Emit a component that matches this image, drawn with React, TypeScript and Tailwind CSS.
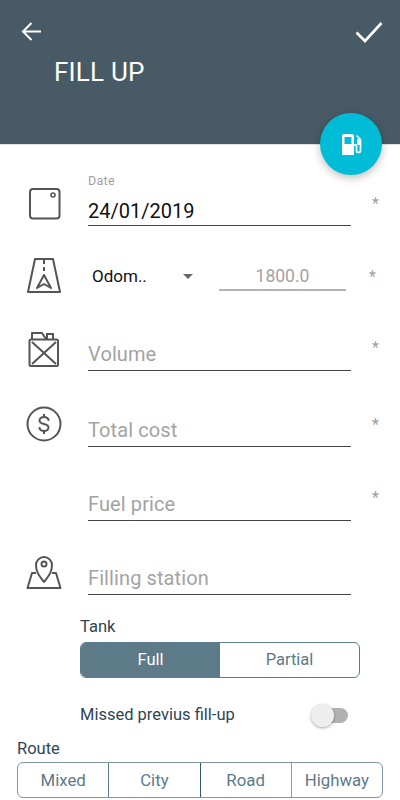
import React from "react";

const font = "font-['Roboto','Noto_Sans',sans-serif]";

function CalendarIcon() {
  return (
    <svg width="34" height="34" viewBox="0 0 34 34" fill="none" stroke="#555" strokeWidth="2">
      <rect x="2" y="2" width="29.5" height="29.5" rx="3" />
      <circle cx="25" cy="8" r="2" strokeWidth="1.6" />
    </svg>
  );
}

function RoadIcon() {
  return (
    <svg width="36" height="38" viewBox="0 0 36 38" fill="none" stroke="#555" strokeWidth="2">
      <path d="M9 2h18l7 33H2z" strokeLinejoin="round" />
      <path d="M18 3v4M18 10v4" />
      <path d="M11 31l7-13 7 13-7-4z" strokeLinejoin="round" />
    </svg>
  );
}

function CanIcon() {
  return (
    <svg width="34" height="38" viewBox="0 0 34 38" fill="none" stroke="#555" strokeWidth="2">
      <path d="M4 9V3h10l4 6" strokeLinejoin="round" />
      <path d="M19 9V4h6v5" />
      <rect x="1.500" y="9.500" width="28.500" height="26.500" rx="1.500" />
      <path d="M4 12l24 22M28 12L4 34" />
    </svg>
  );
}

function DollarIcon() {
  return (
    <svg width="36" height="36" viewBox="0 0 36 36" fill="none" stroke="#555" strokeWidth="2">
      <circle cx="18" cy="18" r="16.500" />
      <path d="M22.500 14c-.5-2-2.300-3-4.500-3s-4.500 1.300-4.500 3.500c0 2.300 2 3 4.500 3.500s4.500 1.300 4.500 3.500-2.300 3.500-4.500 3.500-4-1-4.500-3" strokeLinecap="round" />
      <path d="M18 8v3M18 25v3" />
    </svg>
  );
}

function MapPinIcon() {
  return (
    <svg width="38" height="37" viewBox="0 0 38 37" fill="none" stroke="#555" strokeWidth="2">
      <path d="M18 28c-4.500-6-8-9.500-8-17a8 8 0 0 1 16 0c0 7.500-3.500 11-8 17z" strokeLinejoin="round" />
      <circle cx="18" cy="10" r="2.500" />
      <path d="M10 19H6L1.500 34h33L30 19h-4" strokeLinejoin="round" />
    </svg>
  );
}

function PumpIcon() {
  return (
    <svg className="ml-[2px]" width="20" height="21" viewBox="0 0 20 21" fill="white">
      <path fillRule="evenodd" d="M0 2a2 2 0 0 1 2-2h8a2 2 0 0 1 2 2v19H0zM2.500 3v7h7V3z" />
      <path d="M14.500 1.500l4 4v11a2 2 0 0 1-4 0V11H12" fill="none" stroke="white" strokeWidth="1.700" />
      <path d="M15 5h4v6h-2a2 2 0 0 1-2-2z" />
    </svg>
  );
}

function Row({ height, icon, iconClass, children, starClass }: { height: string; icon?: React.ReactNode; iconClass?: string; children: React.ReactNode; starClass?: string }) {
  return (
    <div className={`flex ${height}`}>
      <div className={`w-[88px] shrink-0 ${iconClass ?? ""}`}>{icon}</div>
      <div className="w-[263px] h-full flex flex-col justify-end">{children}</div>
      {starClass && <span className={`ml-[21px] text-[16px] leading-4 text-[#a0a0a0] ${starClass}`}>*</span>}
    </div>
  );
}

function Field({ label }: { label: string }) {
  return <div className="border-b border-[#444] h-8 text-[20px] leading-[30px] tracking-[0.1px] text-[#a3a3a3]">{label}</div>;
}

export default function App() {
  return (
    <div className={`w-[400px] h-[800px] overflow-hidden bg-white relative ${font}`}>
      <header className="h-[145px] bg-[#475a65] text-white border-b border-[#dfe3e5]">
        <div className="flex justify-between pl-[21px] pr-[17px] pt-[21px]">
          <svg width="21" height="21" viewBox="0 0 21 21" fill="none" stroke="white" strokeWidth="2">
            <path d="M20 10.500H2M10.500 2L2 10.500l8.500 8.500" />
          </svg>
          <svg width="28" height="22" viewBox="0 0 28 22" fill="none" stroke="white" strokeWidth="2.600">
            <path d="M1.500 11.500l8.500 8.500L26.500 2" />
          </svg>
        </div>
        <h1 className="ml-[54px] mt-[13px] text-[26px] leading-8 tracking-[0.2px]">FILL UP</h1>
      </header>

      <div className="absolute left-[320px] top-[113px] w-[62px] h-[62px] rounded-full bg-[#00bcd6] shadow-[0_3px_8px_rgba(0,0,0,0.25)] flex items-center justify-center">
        <PumpIcon />
      </div>

      <Row height="h-[81px]" icon={<CalendarIcon />} iconClass="pt-[42px] pl-[28px]" starClass="mt-[51px]">
        <div className="text-[12.500px] leading-4 text-[#a0a0a0] tracking-[0.3px] mb-[5px]">Date</div>
        <div className="border-b border-[#444] h-[32px] text-[20px] leading-[34px] text-[#111]">24/01/2019</div>
      </Row>

      <div className="flex h-[65px] items-start">
        <div className="w-[88px] pl-[26px] pt-[31px] shrink-0"><RoadIcon /></div>
        <div className="w-[131px] flex items-center pl-[4px] pr-[26px] justify-between mt-[38px] text-[17px] leading-6 text-[#111]">
          <span>Odom..</span>
          <span className="w-0 h-0 border-x-[5px] border-x-transparent border-t-[5px] border-t-[#666]" />
        </div>
        <div className="w-[127px] h-[33px] mt-[32px] border-b-2 border-[#b3b3b3] text-center text-[17.500px] leading-[36px] text-[#a3a3a3]">1800.0</div>
        <span className="ml-[23px] mt-[43px] text-[16px] leading-4 text-[#a0a0a0]">*</span>
      </div>

      <Row height="h-[80px]" icon={<CanIcon />} iconClass="pt-[39px] pl-[28px]" starClass="mt-[49px]">
        <Field label="Volume" />
      </Row>
      <Row height="h-[76px]" icon={<DollarIcon />} iconClass="pt-[35px] pl-[26px]" starClass="mt-[46px]">
        <Field label="Total cost" />
      </Row>
      <Row height="h-[74px]" starClass="mt-[43px]">
        <Field label="Fuel price" />
      </Row>
      <Row height="h-[74px]" icon={<MapPinIcon />} iconClass="pt-[33px] pl-[26px]">
        <Field label="Filling station" />
      </Row>

      <div className="pl-[80px] pt-[22px]">
        <div className="text-[16.500px] leading-5 text-[#2c4654]">Tank</div>
        <div className="mt-[5px] w-[280px] h-[36px] flex rounded-md border border-[#5d7a89] text-[16.500px] overflow-hidden">
          <div className="w-[139px] bg-[#5d7a89] text-white flex items-center justify-center">Full</div>
          <div className="flex-1 text-[#5d7a89] flex items-center justify-center">Partial</div>
        </div>
        <div className="mt-[27px] w-[268px] flex items-center justify-between h-[20px]">
          <span className="text-[16.500px] leading-5 text-[#2c4654]">Missed previus fill-up</span>
          <div className="relative w-[36px] h-[15px] rounded-full bg-[#b2b2b2]">
            <div className="absolute -left-[1px] -top-[4px] w-[23px] h-[23px] rounded-full bg-[#eeeeee] shadow-[0_1px_3px_rgba(0,0,0,0.35)]" />
          </div>
        </div>
      </div>

      <div className="pl-[17px] pt-[14px]">
        <div className="text-[16.500px] leading-5 text-[#2c4654]">Route</div>
        <div className="mt-[3px] w-[366px] h-[36px] flex rounded-md border border-[#7f97a3] text-[16.800px] text-[#5d7a89]">
          <div className="flex-1 pt-px border-r border-[#5d7a89] flex items-center justify-center">Mixed</div>
          <div className="flex-1 pt-px border-r border-[#2f5a70] flex items-center justify-center">City</div>
          <div className="flex-1 pt-px border-r border-[#8ba0ab] flex items-center justify-center">Road</div>
          <div className="flex-1 pt-px flex items-center justify-center">Highway</div>
        </div>
      </div>
    </div>
  );
}
